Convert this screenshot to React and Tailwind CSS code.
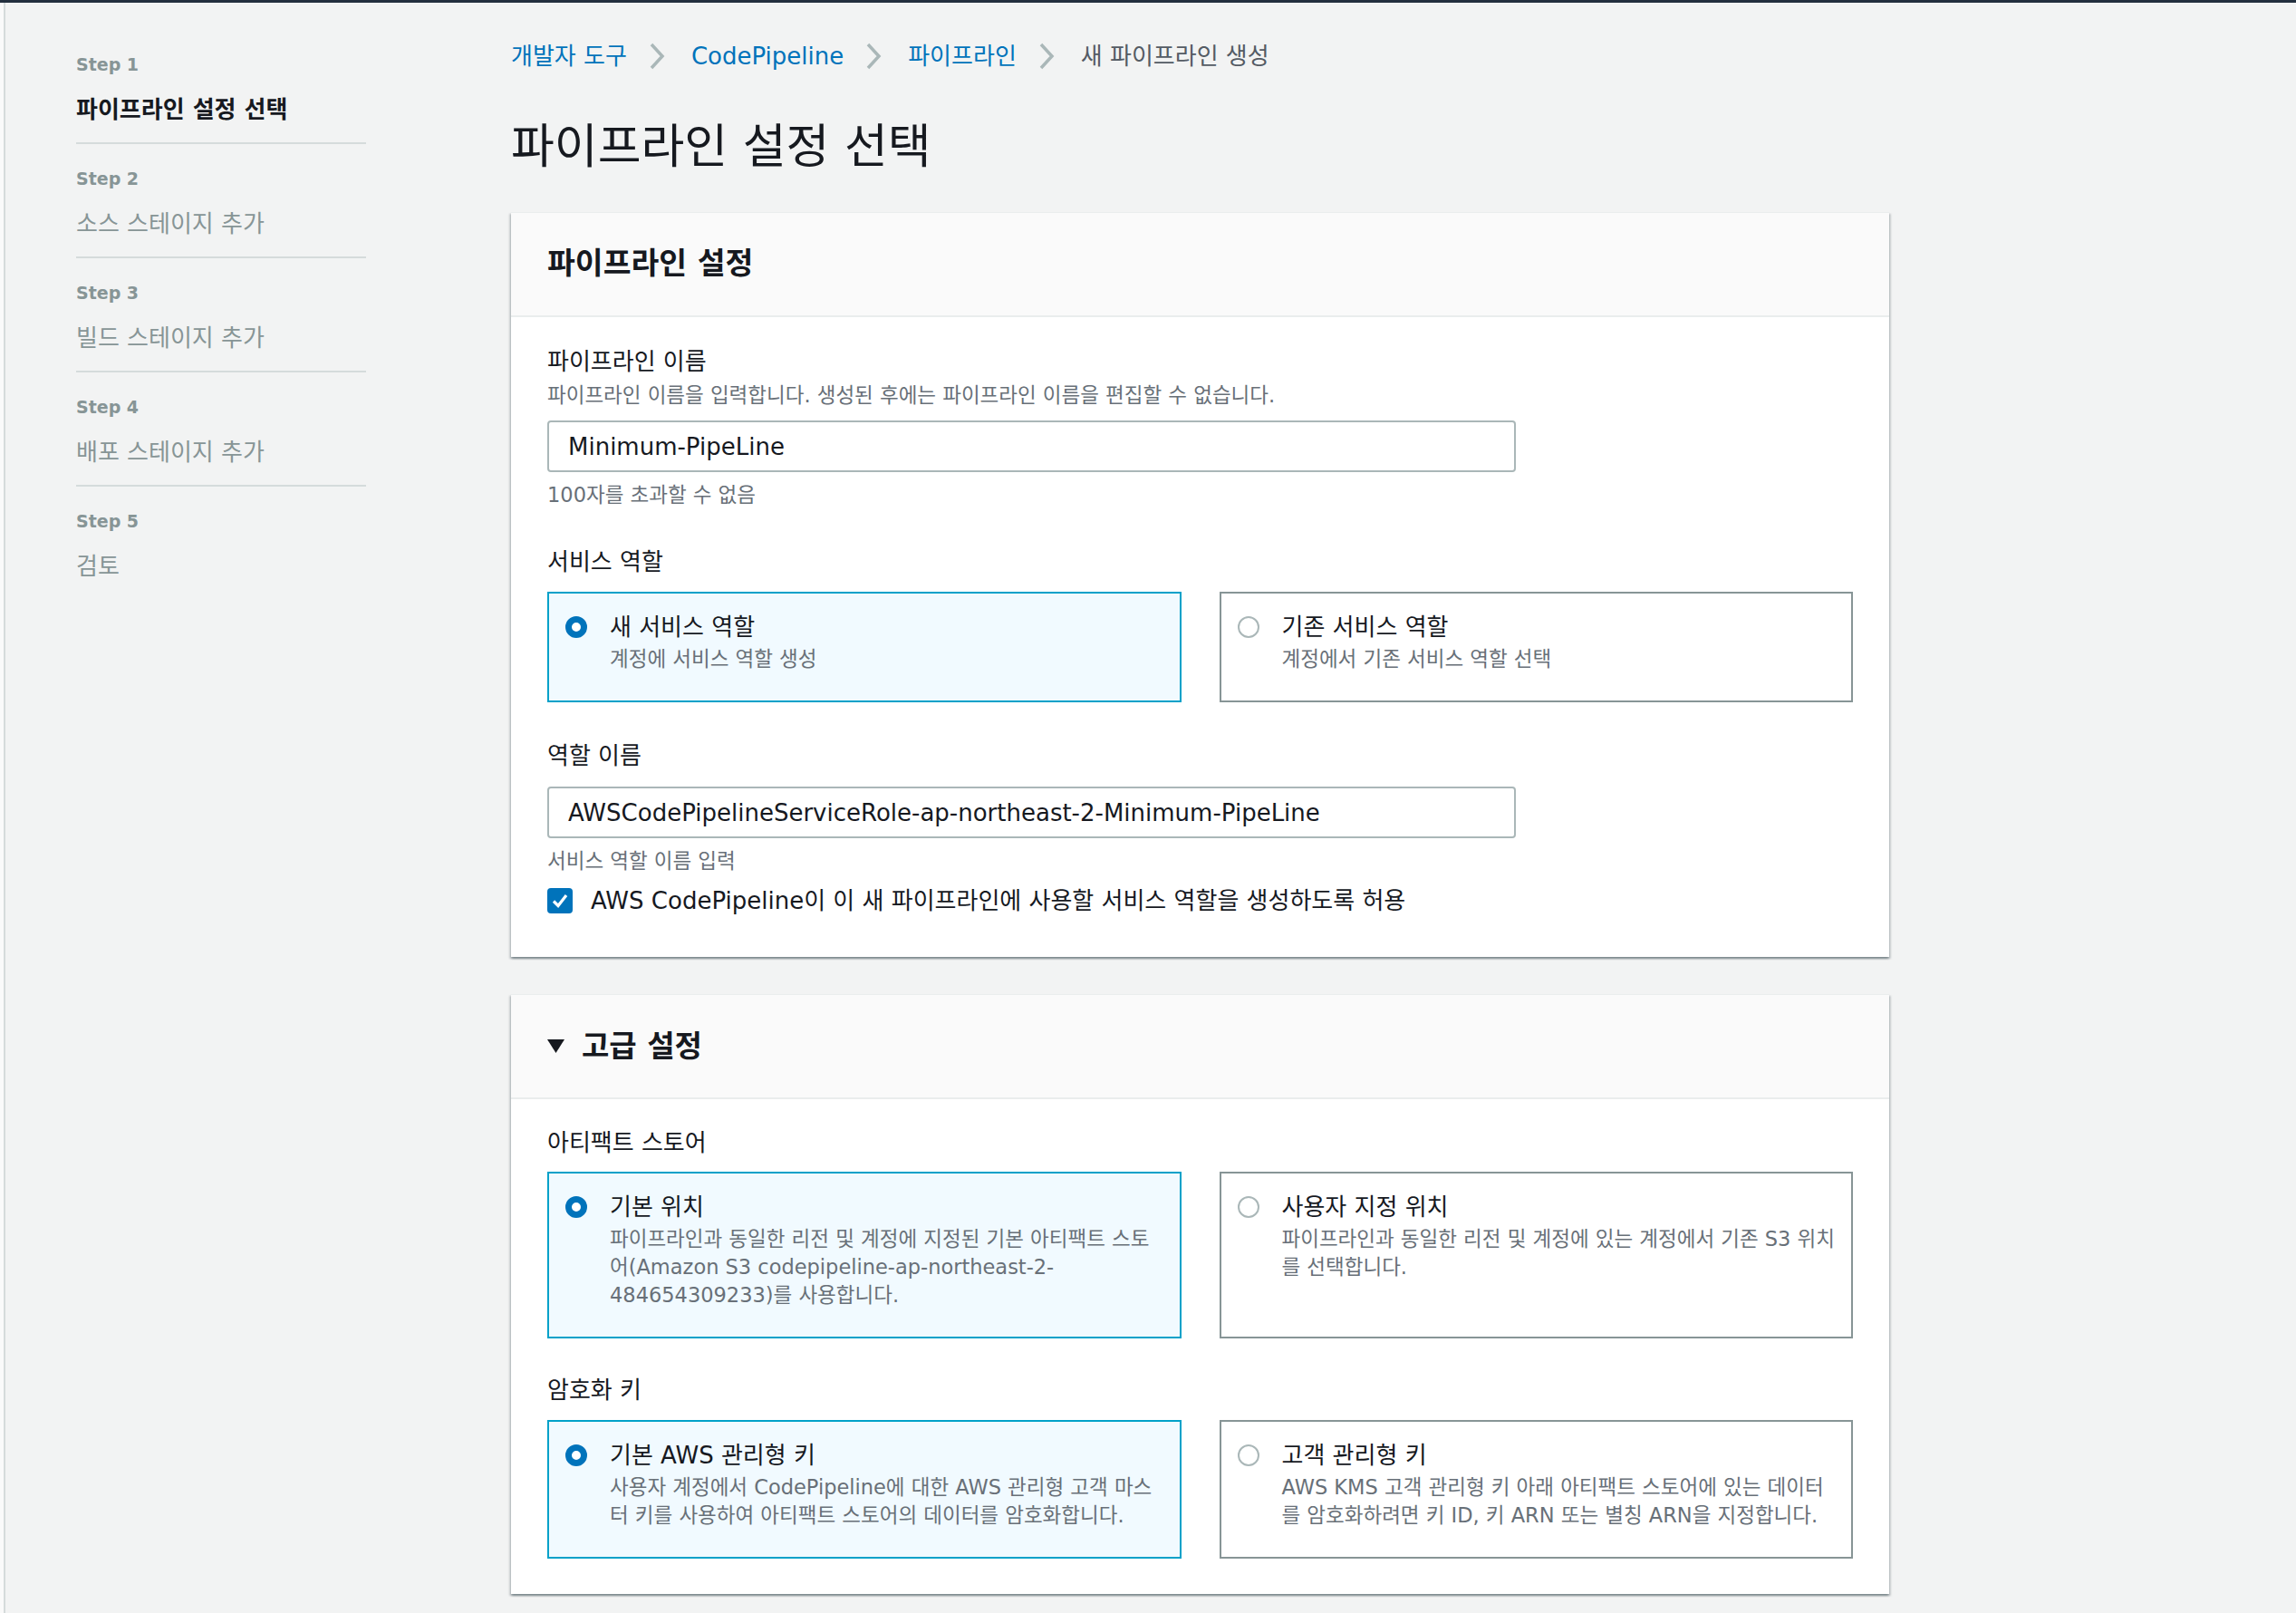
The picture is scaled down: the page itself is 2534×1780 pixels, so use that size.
import React from "react";

const steps = [
    { label: "Step 1", title: "파이프라인 설정 선택", active: true },
    { label: "Step 2", title: "소스 스테이지 추가" },
    { label: "Step 3", title: "빌드 스테이지 추가" },
    { label: "Step 4", title: "배포 스테이지 추가" },
    { label: "Step 5", title: "검토" },
];

function Chevron() {
    return (
        <svg width="17" height="30" viewBox="0 0 17 30" className="ml-[25px] mr-[29px]">
            <polyline points="2,2 14,15 2,28" fill="none" stroke="#aab7b8" strokeWidth="3.5" />
        </svg>
    );
}

function Radio({ checked }) {
    return (
        <div className="h-[36px] flex items-center shrink-0">
            {checked ? (
                <div className="w-[24px] h-[24px] rounded-full border-[7px] border-[#0073bb] bg-white" />
            ) : (
                <div className="w-[24px] h-[24px] rounded-full border-2 border-[#aab7b8] bg-white" />
            )}
        </div>
    );
}

function Tile({ checked, title, children }) {
    return (
        <div
            className={
                checked
                    ? "flex gap-[25px] border-2 border-[#00a1c9] bg-[#f1faff] pl-[18px] pr-[13.5px] pt-[19px] pb-[30px]"
                    : "flex gap-[25px] border-2 border-[#879596] bg-white pl-[18px] pr-[13.5px] pt-[19px] pb-[30px]"
            }
        >
            <Radio checked={checked} />
            <div className="min-w-0">
                <div className="text-[26px] leading-[36px] text-[#16191f]">{title}</div>
                <div className="mt-[2px] text-[22.5px] leading-[31px] text-[#687078]">{children}</div>
            </div>
        </div>
    );
}

function Panel({ header, children, bodyClass }) {
    return (
        <div className="bg-white border-t border-[#eaeded] shadow-[0_2px_2px_0_rgba(0,28,36,0.3),2px_2px_2px_0_rgba(0,28,36,0.15),-2px_2px_2px_0_rgba(0,28,36,0.15)]">
            <div className="h-[115px] px-[40px] flex items-center bg-[#fafafa] border-b-2 border-[#eaeded]">
                {header}
            </div>
            <div className={bodyClass}>{children}</div>
        </div>
    );
}

export default function App() {
    const labelClasses = "text-[26px] leading-[36px] text-[#16191f]";
    const hintClasses = "text-[22.5px] leading-[30px] text-[#687078]";
    const inputClasses = "block w-[1069px] h-[57px] border-2 border-[#aab7b8] rounded-[4px] px-[21px] text-[26px] text-[#16191f] bg-white outline-none";

    return (
        <div className="min-h-[1780px] bg-[#fafafa] pl-[4px] border-t-[3px] border-[#232f3e] font-['DejaVu_Sans','Noto_Sans_CJK_KR',sans-serif]">
            <div className="min-h-[1777px] flex bg-[#f2f3f3] border-l-2 border-[#d5dbdb]">
                {/* wizard steps */}
                <nav className="w-[320px] ml-[78px] pt-[53px] shrink-0">
                    {steps.map((s, i) => (
                        <div key={s.label} className={i === 0 ? "" : "pt-[23px]"}>
                            <div className="text-[19px] leading-[30px] font-bold text-[#879596]">{s.label}</div>
                            <div
                                className={
                                    s.active
                                        ? "mt-[17px] text-[26px] leading-[36px] font-bold text-[#16191f]"
                                        : "mt-[17px] text-[26px] leading-[36px] text-[#879596]"
                                }
                            >
                                {s.title}
                            </div>
                            {i < steps.length - 1 && <div className="mt-[18px] h-[2px] bg-[#d5dbdb]" />}
                        </div>
                    ))}
                </nav>

                <main className="ml-[160px] w-[1521px] pt-[41px] pb-[18px]">
                    <div className="flex items-center text-[26px] leading-[36px]">
                        <span className="text-[#0073bb]">개발자 도구</span>
                        <Chevron />
                        <span className="text-[#0073bb]">CodePipeline</span>
                        <Chevron />
                        <span className="text-[#0073bb]">파이프라인</span>
                        <Chevron />
                        <span className="text-[#545b64]">새 파이프라인 생성</span>
                    </div>

                    <h1 className="mt-[50px] text-[52px] leading-[64px] text-[#16191f]">파이프라인 설정 선택</h1>

                    <div className="mt-[40px]">
                        <Panel
                            header={<h2 className="text-[33.5px] font-bold text-[#16191f]">파이프라인 설정</h2>}
                            bodyClass="px-[40px] pt-[31px] pb-[44px]"
                        >
                            <div className={labelClasses}>파이프라인 이름</div>
                            <div className="text-[22.5px] leading-[38px] text-[#687078]">
                                파이프라인 이름을 입력합니다. 생성된 후에는 파이프라인 이름을 편집할 수 없습니다.
                            </div>
                            <input readOnly value="Minimum-PipeLine" className={`mt-[9px] ${inputClasses}`} />
                            <div className={`mt-[10px] ${hintClasses}`}>100자를 초과할 수 없음</div>

                            <div className={`mt-[41px] ${labelClasses}`}>서비스 역할</div>
                            <div className="mt-[15px] grid grid-cols-2 gap-[42px]">
                                <Tile checked title="새 서비스 역할">계정에 서비스 역할 생성</Tile>
                                <Tile title="기존 서비스 역할">계정에서 기존 서비스 역할 선택</Tile>
                            </div>

                            <div className={`mt-[41px] ${labelClasses}`}>역할 이름</div>
                            <input
                                readOnly
                                value="AWSCodePipelineServiceRole-ap-northeast-2-Minimum-PipeLine"
                                className={`mt-[16px] ${inputClasses}`}
                            />
                            <div className={`mt-[10px] ${hintClasses}`}>서비스 역할 이름 입력</div>

                            <div className="mt-[11px] flex items-center gap-[20px] h-[36px]">
                                <div className="w-[28px] h-[28px] rounded-[4px] bg-[#0073bb] flex items-center justify-center">
                                    <svg width="20" height="20" viewBox="0 0 20 20">
                                        <polyline points="3,10.5 8,15.5 17,4" fill="none" stroke="white" strokeWidth="3.2" />
                                    </svg>
                                </div>
                                <span className="text-[26px] text-[#16191f]">
                                    AWS CodePipeline이 이 새 파이프라인에 사용할 서비스 역할을 생성하도록 허용
                                </span>
                            </div>
                        </Panel>
                    </div>

                    <div className="mt-[41px]">
                        <Panel
                            header={
                                <div className="flex items-center gap-[19px]">
                                    <svg width="19" height="15" viewBox="0 0 19 15">
                                        <polygon points="0,0 19,0 9.5,15" fill="#16191f" />
                                    </svg>
                                    <h2 className="text-[33px] font-bold text-[#16191f]">고급 설정</h2>
                                </div>
                            }
                            bodyClass="px-[40px] pt-[30px] pb-[39px]"
                        >
                            <div className={labelClasses}>아티팩트 스토어</div>
                            <div className="mt-[14px] grid grid-cols-2 gap-[42px]">
                                <Tile checked title="기본 위치">
                                    파이프라인과 동일한 리전 및 계정에 지정된 기본 아티팩트 스토어(Amazon S3 codepipeline-ap-northeast-2-484654309233)를 사용합니다.
                                </Tile>
                                <Tile title="사용자 지정 위치">
                                    파이프라인과 동일한 리전 및 계정에 있는 계정에서 기존 S3 위치를 선택합니다.
                                </Tile>
                            </div>

                            <div className={`mt-[39px] ${labelClasses}`}>암호화 키</div>
                            <div className="mt-[15px] grid grid-cols-2 gap-[42px]">
                                <Tile checked title="기본 AWS 관리형 키">
                                    사용자 계정에서 CodePipeline에 대한 AWS 관리형 고객 마스터 키를 사용하여 아티팩트 스토어의 데이터를 암호화합니다.
                                </Tile>
                                <Tile title="고객 관리형 키">
                                    AWS KMS 고객 관리형 키 아래 아티팩트 스토어에 있는 데이터를 암호화하려면 키 ID, 키 ARN 또는 별칭 ARN을 지정합니다.
                                </Tile>
                            </div>
                        </Panel>
                    </div>
                </main>
            </div>
        </div>
    );
}
